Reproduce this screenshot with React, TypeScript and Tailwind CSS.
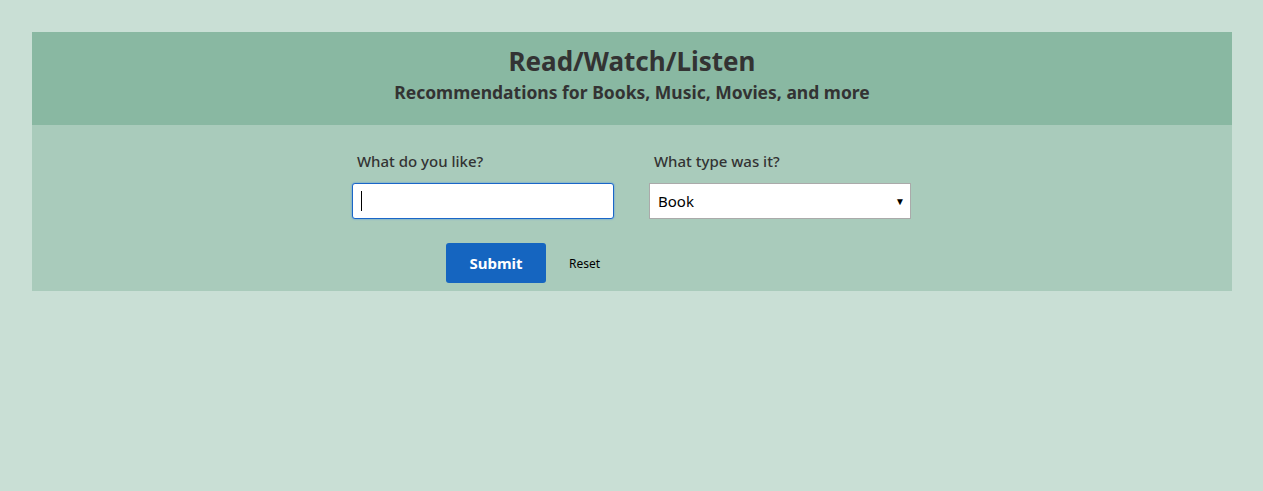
export default function App() {
  return (
    <div className="min-h-screen bg-[#c9dfd5] pt-8 px-8 text-[#333] font-['Noto_Sans',sans-serif]">
      <div className="w-[1200px]">
        {/* Header */}
        <header className="h-[93px] bg-[#89b8a2] flex flex-col items-center pt-[10px]">
          <h1 className="text-[26px] font-bold leading-[38px]">Read/Watch/Listen</h1>
          <h2 className="text-[17.5px] font-bold leading-[24px]">
            Recommendations for Books, Music, Movies, and more
          </h2>
        </header>

        {/* Form */}
        <section className="h-[166px] bg-[#a9cbbb] flex justify-center pt-[25px]">
          <form className="w-[560px]" onSubmit={(e) => e.preventDefault()}>
            <div className="flex gap-[35px]">
              <div className="flex flex-col">
                <label className="pl-[5px] text-[15px] font-medium leading-[22px] mb-[11px]">
                  What do you like?
                </label>
                <div className="relative">
                  <input
                    type="text"
                    className="w-[262px] h-[36px] bg-white border border-[#1a66c8] rounded-[3px] px-2 outline-none shadow-[0_0_2px_#4a90e2] text-[15px]"
                  />
                  {/* caret */}
                  <span className="absolute left-[9px] top-[8px] w-px h-[20px] bg-black pointer-events-none" />
                </div>
              </div>
              <div className="flex flex-col">
                <label className="pl-[5px] text-[15px] font-medium leading-[22px] mb-[11px]">
                  What type was it?
                </label>
                <div className="relative w-[262px] h-[36px] bg-white border border-[#aaa]">
                  <select className="w-full h-full appearance-none bg-transparent pl-[8px] text-[15px] text-black outline-none">
                    <option>Book</option>
                    <option>Music</option>
                    <option>Movie</option>
                  </select>
                  <span className="absolute right-[5px] top-[10px] text-[10px] text-black pointer-events-none">
                    ▼
                  </span>
                </div>
              </div>
            </div>
            <div className="flex items-center mt-[24px] pl-[94px]">
              <button
                type="submit"
                className="w-[100px] h-[40px] rounded-[3px] bg-[#1565c0] text-white font-bold text-[15px]"
              >
                Submit
              </button>
              <button type="reset" className="ml-[23px] mt-[2px] text-[12px] text-black">
                Reset
              </button>
            </div>
          </form>
        </section>
      </div>
    </div>
  );
}
